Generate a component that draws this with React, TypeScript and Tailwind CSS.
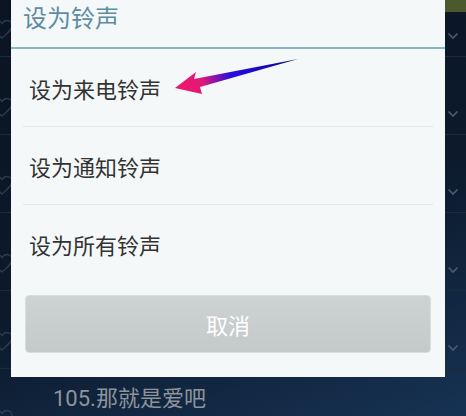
import React from 'react';

const rows = [0, 1, 2, 3, 4, 5];
const options = ['设为来电铃声', '设为通知铃声', '设为所有铃声'];

const Heart = () => (
  <svg width="24" height="22" viewBox="0 0 24 22" fill="none" stroke="#3a4a5c" strokeWidth="1.4">
    <path d="M12 20 C6 15 2 11.5 2 7.5 C2 4.5 4.3 2.5 7 2.5 C9.2 2.5 10.8 3.8 12 5.6 C13.2 3.8 14.8 2.5 17 2.5 C19.7 2.5 22 4.5 22 7.5 C22 11.5 18 15 12 20 Z" />
  </svg>
);

const Chevron = () => (
  <svg width="12" height="8" viewBox="0 0 12 8" fill="none" stroke="#4b5b6e" strokeWidth="1.6">
    <path d="M1.5 1.5 L6 6 L10.5 1.5" />
  </svg>
);

const App = () => {
  return (
    <div
      className="relative w-[466px] h-[416px] overflow-hidden bg-[linear-gradient(160deg,#0b1422_0%,#0c1a2c_55%,#163253_100%)]"
      style={{ fontFamily: '"Noto Sans CJK SC", sans-serif' }}
    >
      {/* Song list behind the dialog */}
      <div className="flex flex-col -mt-[21px]">
        {rows.map((i) => (
          <div key={i} className="relative h-[78px] border-b border-[#1c2a3c] flex items-end justify-between pb-[16px]">
            <div className="-ml-[10px] opacity-70">
              <Heart />
            </div>
            <div className="mr-[7px]">
              <Chevron />
            </div>
          </div>
        ))}
      </div>

      {/* Status chip top right */}
      <div className="absolute right-0 top-0 w-[21px] h-[12px] bg-[#4b5a2c]" />

      {/* Next song title peeking below */}
      <div
        className="absolute left-[53px] top-[385px] text-[22px] leading-[28px] text-[#8d949c]"
        style={{ fontFamily: 'Roboto, "Noto Sans CJK SC", sans-serif' }}
      >
        105.那就是爱吧
      </div>

      {/* Dialog */}
      <div className="absolute left-[11px] top-0 w-[434px] h-[377px] bg-[#f5f8f8] flex flex-col">
        <div className="h-[47px] flex items-start pt-[5px] pl-[12px]">
          <span className="text-[24px] text-[#5e8ca2] leading-none">设为铃声</span>
        </div>
        <div className="h-[2px] bg-[#86b6c8]" />
        <div className="flex flex-col">
          {options.map((o, i) => (
            <div key={o} className="flex flex-col">
              <div className="h-[77px] flex items-center pl-[18px] text-[22px] text-[#333] leading-none">
                {o}
              </div>
              {i < 2 && <div className="h-px bg-[#e1e8ea] mx-[12px]" />}
            </div>
          ))}
        </div>
        <div className="mt-[13px] mx-[14px] h-[58px] rounded-[4px] border border-[#dadede] bg-[linear-gradient(#cdd2d2,#c4c9c9)] flex items-center justify-center">
          <span className="text-[22px] text-white leading-none">取消</span>
        </div>
      </div>

      {/* Annotation arrow */}
      <svg className="absolute left-0 top-0" width="466" height="416" viewBox="0 0 466 416">
        <defs>
          <linearGradient id="arr" x1="175" y1="88" x2="298" y2="59" gradientUnits="userSpaceOnUse">
            <stop offset="0" stopColor="#f2166a" />
            <stop offset="0.22" stopColor="#e01878" />
            <stop offset="0.45" stopColor="#2a0ee0" />
            <stop offset="0.8" stopColor="#1206b0" />
            <stop offset="1" stopColor="#0a1a50" />
          </linearGradient>
        </defs>
        <polygon
          points="175,88 196,72 194,79 298,59 200,87 202,94"
          fill="url(#arr)"
        />
      </svg>
    </div>
  );
};

export default App;
